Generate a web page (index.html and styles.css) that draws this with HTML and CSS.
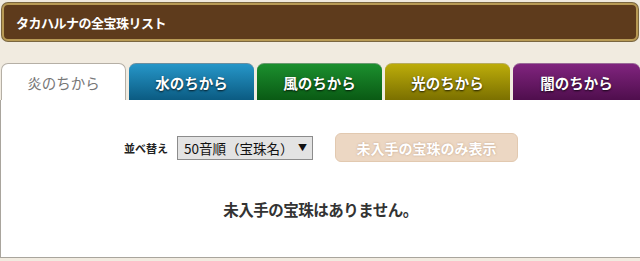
FILE: index.html
```html
<!DOCTYPE html>
<html lang="ja">
  <head>
    <meta charset="utf-8">
    <title>全宝珠リスト</title>
    <link rel="stylesheet" href="styles.css">
  </head>
  <body>
    <div class="page">
      <div class="titleBar">
        <h1 class="title">タカハルナの全宝珠リスト</h1>
      </div>
      <div class="tabs">
        <div class="tab fire active">炎のちから</div>
        <div class="tab water">水のちから</div>
        <div class="tab wind">風のちから</div>
        <div class="tab light">光のちから</div>
        <div class="tab dark">闇のちから</div>
      </div>
      <div class="panel">
        <div class="controls">
          <span class="sortLabel">並べ替え</span>
          <div class="select">
            <span>50音順（宝珠名）</span>
            <span class="arrow">▼</span>
          </div>
          <div class="filterBtn">未入手の宝珠のみ表示</div>
        </div>
        <p class="message">未入手の宝珠はありません。</p>
      </div>
    </div>
  </body>
</html>
```

FILE: styles.css
```css
* {
  margin: 0;
  box-sizing: border-box;
}
body {
  background-color: #f1ebe0;
  font-family: "Noto Sans CJK JP", "Noto Sans", sans-serif;
  width: 640px;
  height: 261px;
  overflow: hidden;
}
.page {
  padding-top: 3px;
}
.titleBar {
  margin: 0 2px;
  height: 38px;
  background-color: #5e3b1c;
  border: 2px solid #b89a55;
  border-radius: 6px;
  box-shadow: 0 0 0 1px #7a6640;
  display: flex;
  align-items: center;
  padding-left: 12px;
}
.title {
  color: #fff;
  font-size: 13px;
  font-weight: bold;
  letter-spacing: -0.5px;
}
.tabs {
  display: flex;
  gap: 3px;
  margin-top: 22px;
  padding-left: 1px;
}
.tab {
  width: 125px;
  height: 37px;
  border-radius: 7px 7px 0 0;
  display: flex;
  align-items: center;
  justify-content: center;
  font-size: 14.5px;
  font-weight: bold;
  color: #fff;
  text-shadow: 0 1px 2px rgba(0, 0, 0, 0.8);
}
.tab.active {
  background-color: #fff;
  border: 1px solid #b5afa5;
  border-bottom: none;
  color: #777;
  font-weight: normal;
  text-shadow: none;
  font-size: 14.5px;
}
.water {
  background: linear-gradient(#2696c8, #0b5b82);
  border-top: 1px solid #6a8ea0;
}
.wind {
  background: linear-gradient(#1c8f2e, #0a5a14);
  border-top: 1px solid #6a9a70;
}
.light {
  background: linear-gradient(#bcac0a, #7b7000);
  border-top: 1px solid #b8ac60;
}
.dark {
  background: linear-gradient(#80247e, #4f0e4d);
  border-top: 1px solid #9a6a98;
  width: 127px;
}
.panel {
  background-color: #fff;
  border: 1px solid #a9a59d;
  border-top: none;
  border-right: none;
  height: 158px;
}
.controls {
  display: flex;
  align-items: center;
  padding-top: 33px;
  padding-left: 123px;
}
.sortLabel {
  font-size: 11px;
  font-weight: bold;
  color: #222;
  margin-right: 9px;
}
.select {
  width: 136px;
  height: 24px;
  background-color: #e3e3e3;
  border: 1px solid #8c8c8c;
  display: flex;
  align-items: center;
  justify-content: space-between;
  padding: 0 5px 0 6px;
  font-size: 13.5px;
  color: #111;
}
.arrow {
  font-size: 9px;
}
.filterBtn {
  margin-left: 22px;
  width: 183px;
  height: 29px;
  background-color: #ecd7c3;
  border: 1px solid #e2c9b0;
  border-radius: 6px;
  display: flex;
  align-items: center;
  justify-content: center;
  color: #fff;
  font-size: 14px;
  font-weight: bold;
  text-shadow: 0 0 2px rgba(160, 120, 90, 0.6);
}
.message {
  text-align: center;
  font-size: 15.5px;
  font-weight: bold;
  color: #333;
  margin-top: 36px;
  letter-spacing: -0.5px;
}
```
